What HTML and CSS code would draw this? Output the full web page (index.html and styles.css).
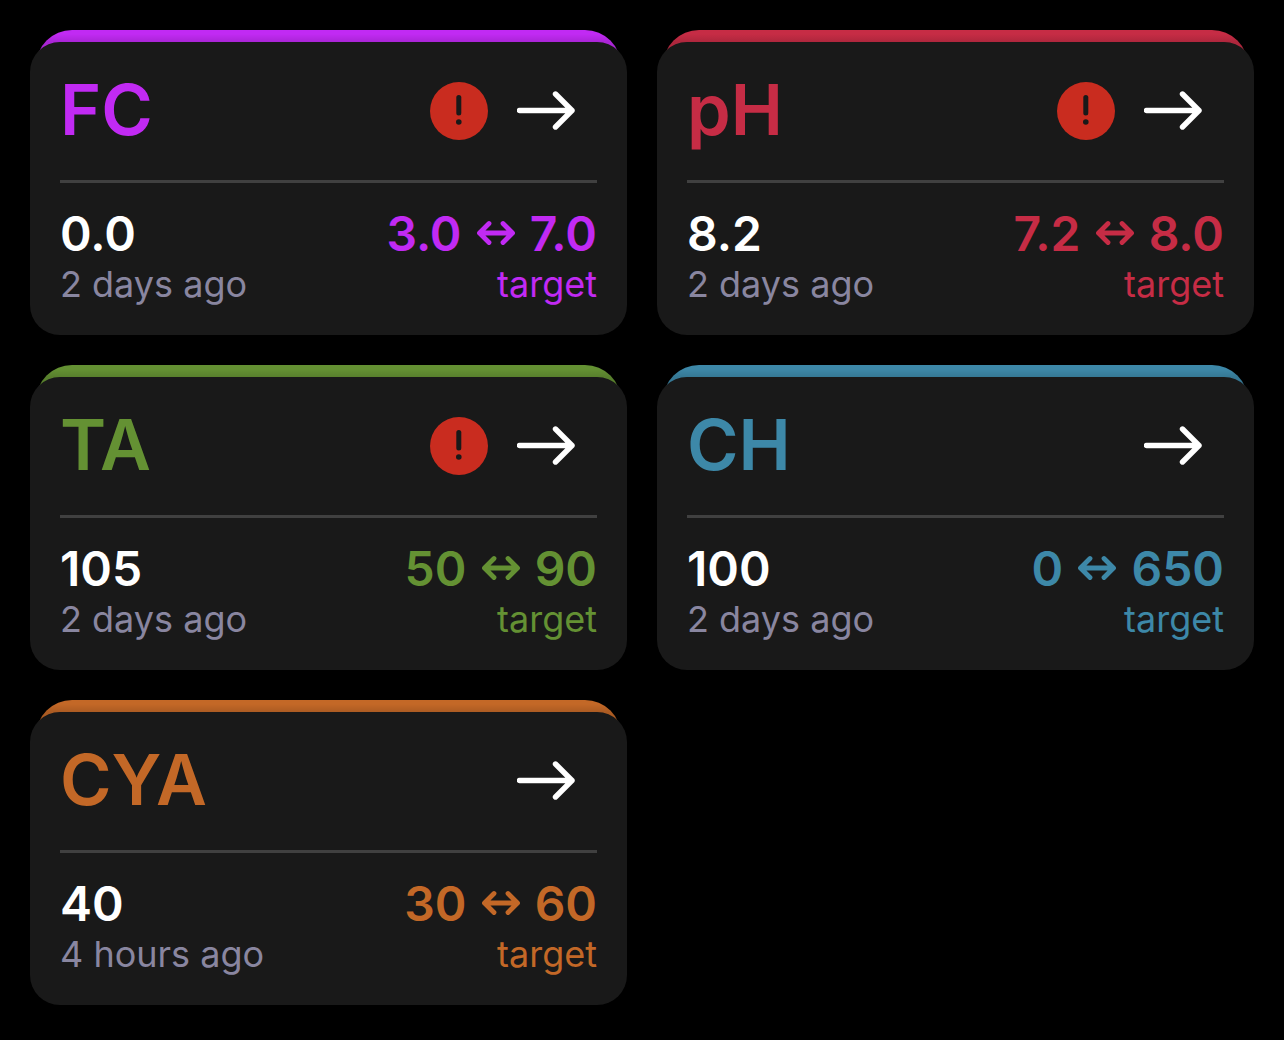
FILE: index.html
```html
<!DOCTYPE html>
<html lang="en">
<head>
	<meta charset="UTF-8">
	<meta name="viewport" content="width=device-width, initial-scale=1">
	<title>Readings</title>
	<link rel="stylesheet" href="styles.css">
</head>
<body>
	<!-- shared icons -->
	<svg class="sprite" aria-hidden="true">
		<symbol id="alert" viewBox="0 0 58 58">
			<circle cx="29" cy="29" r="29" fill="#c92c1f"/>
			<path d="M28.8 15.5v15.5" stroke="#191919" stroke-width="5" stroke-linecap="round"/>
			<circle cx="28.8" cy="40" r="2.8" fill="#191919"/>
		</symbol>
		<symbol id="arrow" viewBox="0 0 58 58">
			<path d="M2.5 28.5H55M38.5 12L55 28.5L38.5 45" fill="none" stroke="currentColor" stroke-width="5.4" stroke-linecap="round" stroke-linejoin="round"/>
		</symbol>
		<symbol id="range" viewBox="0 0 38 26">
			<path d="M3 13H35M12 3.5L2.5 13L12 22.5M26 3.5L35.5 13L26 22.5" fill="none" stroke="currentColor" stroke-width="4.8" stroke-linecap="round" stroke-linejoin="round"/>
		</symbol>
	</svg>
	<main class="readings">
		<section class="reading fc">
			<div class="card">
				<header>
					<h2>FC</h2>
					<svg class="icon" role="img" aria-label="Out of range"><use href="#alert"/></svg>
					<a class="more" href="#fc" aria-label="Open FC"><svg class="icon"><use href="#arrow"/></svg></a>
				</header>
				<div class="info">
					<div class="last">
						<p class="value">0.0</p>
						<p class="note">2 days ago</p>
					</div>
					<div class="target">
						<p class="value">3.0 <svg class="range"><use href="#range"/></svg> 7.0</p>
						<p class="note">target</p>
					</div>
				</div>
			</div>
		</section>
		<section class="reading ph">
			<div class="card">
				<header>
					<h2>pH</h2>
					<svg class="icon" role="img" aria-label="Out of range"><use href="#alert"/></svg>
					<a class="more" href="#ph" aria-label="Open pH"><svg class="icon"><use href="#arrow"/></svg></a>
				</header>
				<div class="info">
					<div class="last">
						<p class="value">8.2</p>
						<p class="note">2 days ago</p>
					</div>
					<div class="target">
						<p class="value">7.2 <svg class="range"><use href="#range"/></svg> 8.0</p>
						<p class="note">target</p>
					</div>
				</div>
			</div>
		</section>
		<section class="reading ta">
			<div class="card">
				<header>
					<h2>TA</h2>
					<svg class="icon" role="img" aria-label="Out of range"><use href="#alert"/></svg>
					<a class="more" href="#ta" aria-label="Open TA"><svg class="icon"><use href="#arrow"/></svg></a>
				</header>
				<div class="info">
					<div class="last">
						<p class="value">105</p>
						<p class="note">2 days ago</p>
					</div>
					<div class="target">
						<p class="value">50 <svg class="range"><use href="#range"/></svg> 90</p>
						<p class="note">target</p>
					</div>
				</div>
			</div>
		</section>
		<section class="reading ch">
			<div class="card">
				<header>
					<h2>CH</h2>
					<a class="more" href="#ch" aria-label="Open CH"><svg class="icon"><use href="#arrow"/></svg></a>
				</header>
				<div class="info">
					<div class="last">
						<p class="value">100</p>
						<p class="note">2 days ago</p>
					</div>
					<div class="target">
						<p class="value">0 <svg class="range"><use href="#range"/></svg> 650</p>
						<p class="note">target</p>
					</div>
				</div>
			</div>
		</section>
		<section class="reading cya">
			<div class="card">
				<header>
					<h2>CYA</h2>
					<a class="more" href="#cya" aria-label="Open CYA"><svg class="icon"><use href="#arrow"/></svg></a>
				</header>
				<div class="info">
					<div class="last">
						<p class="value">40</p>
						<p class="note">4 hours ago</p>
					</div>
					<div class="target">
						<p class="value">30 <svg class="range"><use href="#range"/></svg> 60</p>
						<p class="note">target</p>
					</div>
				</div>
			</div>
		</section>
	</main>
</body>
</html>
```
FILE: styles.css
```css
* {
	margin: 0;
	padding: 0;
	box-sizing: border-box;
}
body {
	background-color: #000;
	color: #fff;
	font-family: Inter, "Liberation Sans", sans-serif;
}
.sprite {
	position: absolute;
	width: 0;
	height: 0;
}

.readings {
	display: grid;
	grid-template-columns: 1fr 1fr;
	gap: 30px;
	padding: 30px;
}

.fc { --color: #c12af3; }
.ph { --color: #c62c45; }
.ta { --color: #649133; }
.ch { --color: #3d88a8; }
.cya { --color: #c36827; }

.reading {
	position: relative;
	padding-top: 12px;
}
/* coloured lip that shows behind the top of the card */
.reading::before {
	content: "";
	position: absolute;
	top: 0;
	left: 6px;
	right: 6px;
	height: 60px;
	border-radius: 36px 36px 0 0;
	background: linear-gradient(rgba(0,0,0,0) 4px, rgba(0,0,0,.12) 12px) var(--color);
}
.card {
	position: relative;
	padding: 0 30px 29px;
	border-radius: 30px;
	background-color: #191919;
}

.card header {
	display: flex;
	align-items: center;
	gap: 29px;
	height: 141px;
	padding-right: 22px;
	border-bottom: 3px solid #404040;
}
.card h2 {
	flex: 1;
	padding-bottom: 2px;
	color: var(--color);
	font-size: 70px;
	font-weight: 600;
	line-height: 84px;
}
.icon {
	display: block;
	width: 58px;
	height: 58px;
}
.more {
	color: #fff;
}

.info {
	display: flex;
	justify-content: space-between;
	padding-top: 23px;
}
.value {
	font-size: 48px;
	font-weight: 600;
	line-height: 56px;
}
.note {
	color: #8986a0;
	font-size: 36px;
	line-height: 44px;
}
.target {
	text-align: right;
}
.target .value,
.target .note {
	color: var(--color);
}
.range {
	width: 38px;
	height: 26px;
	margin: 0 3px;
	vertical-align: 5px;
}
```
